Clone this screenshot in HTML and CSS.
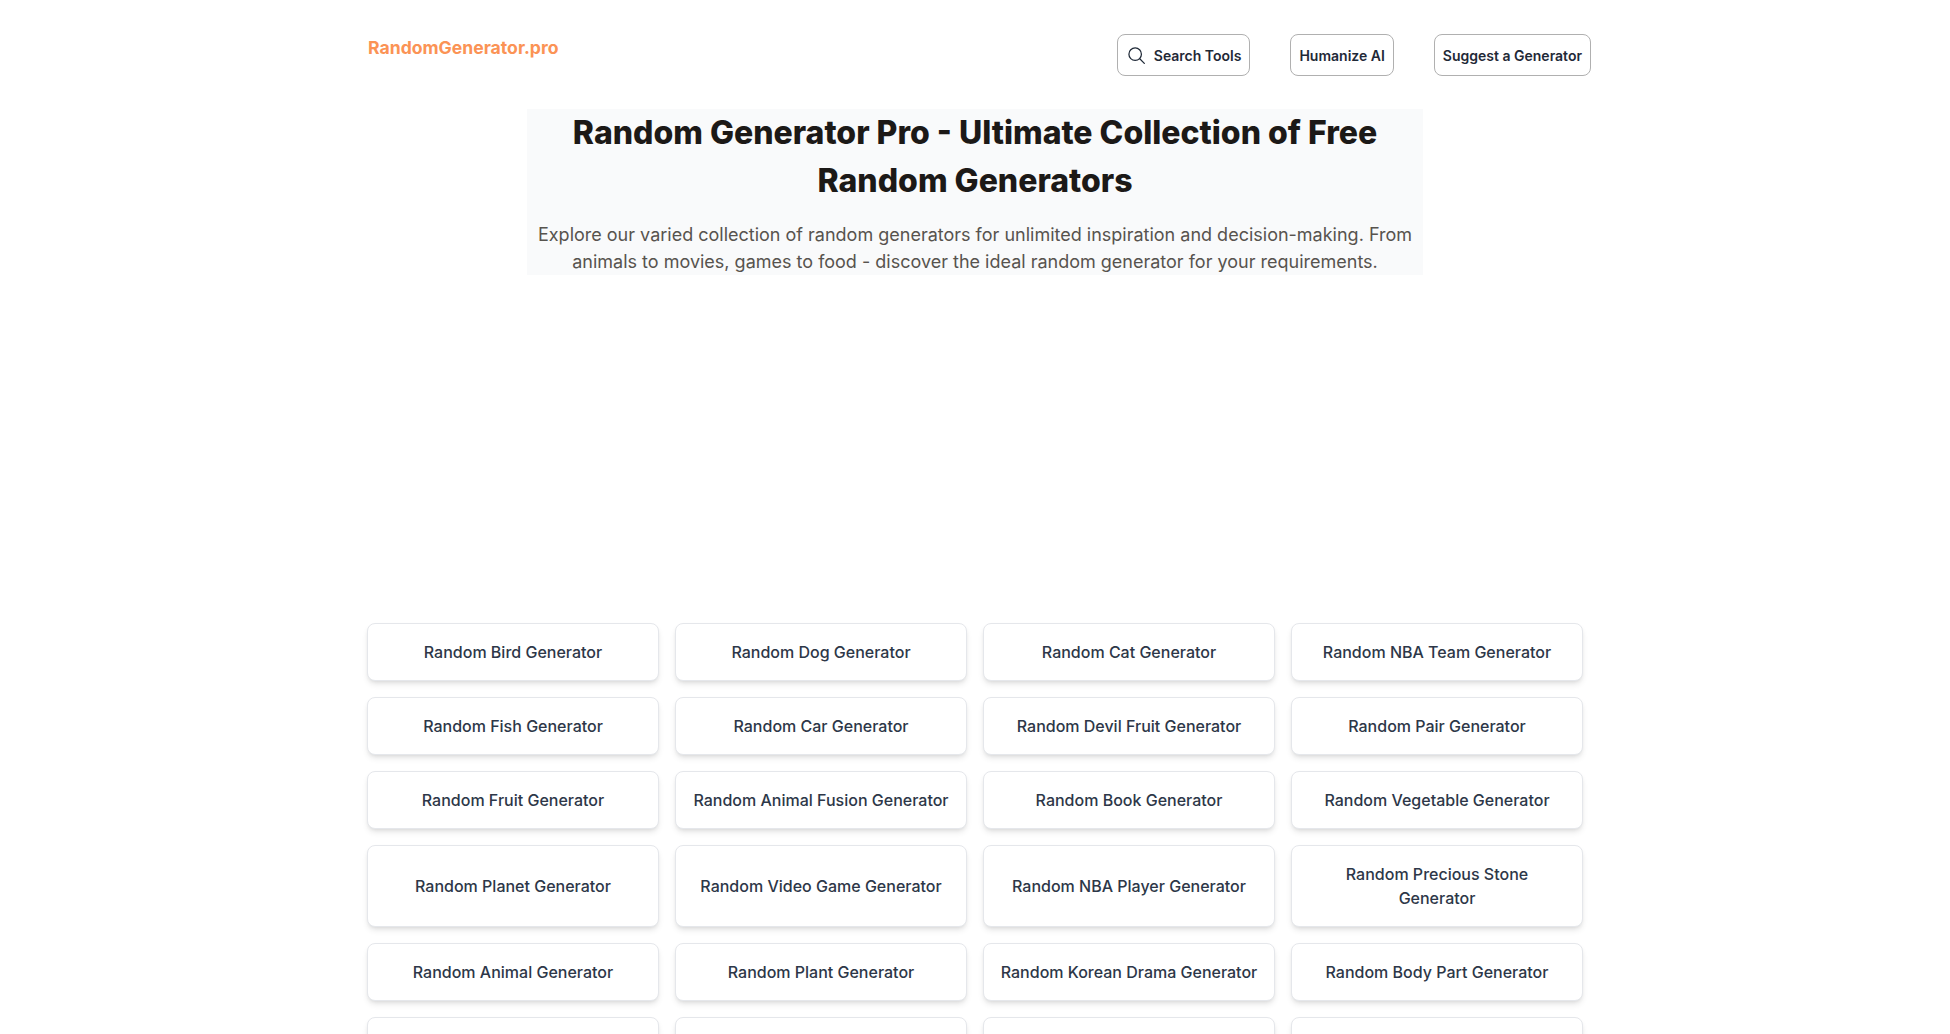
FILE: index.html
```html
<!DOCTYPE html>
<html lang="en">
<head>
<meta charset="utf-8">
<title>Random Generator Pro</title>
<link rel="stylesheet" href="styles.css">
</head>
<body>
<div class="page">
  <header class="site-header">
    <a class="logo" href="#">RandomGenerator.pro</a>
    <nav class="nav">
      <a class="nav-btn" href="#">
        <svg class="search-icon" width="20" height="20" viewBox="0 0 24 24" fill="none" stroke="currentColor" stroke-width="1.5" stroke-linecap="round" stroke-linejoin="round"><circle cx="11" cy="11" r="7.5"/><path d="M16.5 16.5l5.5 5.5"/></svg>
        <span>Search Tools</span>
      </a>
      <a class="nav-btn" href="#">Humanize AI</a>
      <a class="nav-btn" href="#">Suggest a Generator</a>
    </nav>
  </header>
  <section class="hero">
    <h1>Random Generator Pro - Ultimate Collection of Free Random Generators</h1>
    <p>Explore our varied collection of random generators for unlimited inspiration and decision-making. From animals to movies, games to food - discover the ideal random generator for your requirements.</p>
  </section>
  <div class="ad-slot"></div>
  <main class="grid">
    <a class="card" href="#">Random Bird Generator</a>
    <a class="card" href="#">Random Dog Generator</a>
    <a class="card" href="#">Random Cat Generator</a>
    <a class="card" href="#">Random NBA Team Generator</a>
    <a class="card" href="#">Random Fish Generator</a>
    <a class="card" href="#">Random Car Generator</a>
    <a class="card" href="#">Random Devil Fruit Generator</a>
    <a class="card" href="#">Random Pair Generator</a>
    <a class="card" href="#">Random Fruit Generator</a>
    <a class="card" href="#">Random Animal Fusion Generator</a>
    <a class="card" href="#">Random Book Generator</a>
    <a class="card" href="#">Random Vegetable Generator</a>
    <a class="card" href="#">Random Planet Generator</a>
    <a class="card" href="#">Random Video Game Generator</a>
    <a class="card" href="#">Random NBA Player Generator</a>
    <a class="card" href="#">Random Precious Stone Generator</a>
    <a class="card" href="#">Random Animal Generator</a>
    <a class="card" href="#">Random Plant Generator</a>
    <a class="card" href="#">Random Korean Drama Generator</a>
    <a class="card" href="#">Random Body Part Generator</a>
    <div class="card"></div>
    <div class="card"></div>
    <div class="card"></div>
    <div class="card"></div>
  </main>
</div>
</body>
</html>
```
FILE: styles.css
```css
* { box-sizing: border-box; }
html, body { margin: 0; padding: 0; background: #fff; }
body { font-family: Inter, "Liberation Sans", sans-serif; color: #1f2937; }
a { text-decoration: none; color: inherit; }
.page { width: 1216px; margin: 0 auto; }
.site-header { display: flex; justify-content: space-between; align-items: flex-start; height: 109px; padding: 34px 0 0 1px; margin-right: -8px; }
.logo { font-size: 17.6px; font-weight: 700; line-height: 28px; color: #fb9355; }
.nav { display: flex; gap: 40px; }
.nav-btn { display: flex; align-items: center; gap: 8px; height: 42px; padding: 0 8px; border: 1px solid #b0b0b0; border-radius: 8px; font-size: 14px; font-weight: 600; color: #1f2937; background: #fff; }
.search-icon { flex: none; }
.hero { width: 896px; margin: 0 auto; background: #f9fafb; text-align: center; }
.hero h1 { margin: 0 0 16px; font-size: 32px; line-height: 48px; font-weight: 800; color: #1c1917; }
.hero p { margin: 0; font-size: 18px; line-height: 27px; color: #57534e; }
.ad-slot { height: 348px; }
.grid { display: grid; grid-template-columns: repeat(4, 1fr); gap: 16px; padding-bottom: 32px; }
.card { display: flex; align-items: center; justify-content: center; text-align: center; min-height: 58px; padding: 16px; background: #fff; border: 1px solid #e5e7eb; border-radius: 8px; box-shadow: 0 4px 6px -1px rgba(0,0,0,.1), 0 2px 4px -2px rgba(0,0,0,.1); font-size: 16px; line-height: 24px; font-weight: 500; color: #2d3748; }
```
